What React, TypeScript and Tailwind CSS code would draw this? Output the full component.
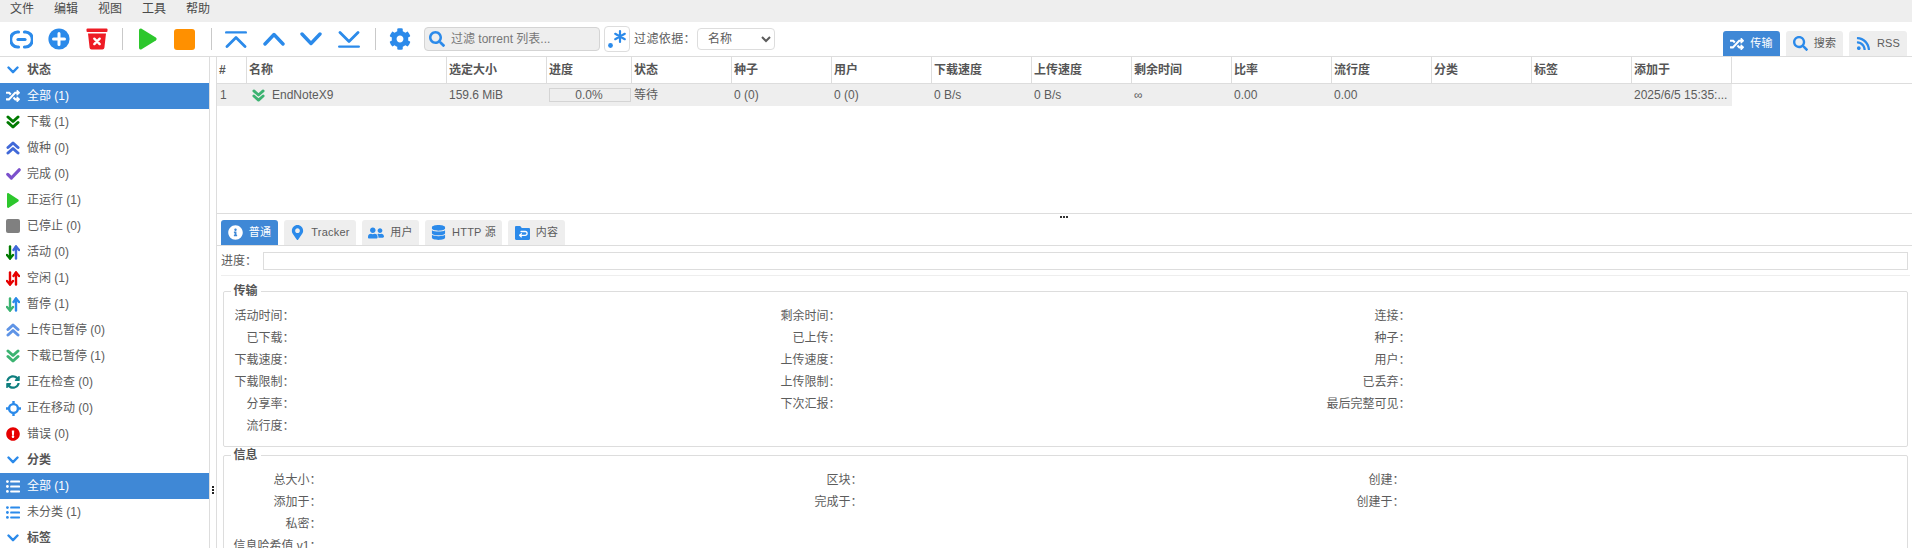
import React from "react";
import {
  FaCog,
  FaRandom,
  FaSearch,
  FaRss,
  FaInfoCircle,
  FaMapMarkerAlt,
  FaUserFriends,
  FaDatabase,
  FaSyncAlt,
  FaExclamationCircle,
} from "react-icons/fa";

const BLUE = "#2b8aea";

function Sep({ className }: { className: string }) {
  return <div className={`w-px h-[22px] bg-[#c9c9c9] ${className}`} />;
}

function ToolBtn({ children }: { children: React.ReactNode }) {
  return <div className="w-[37.5px] h-[24px] flex items-center justify-center shrink-0">{children}</div>;
}

function Chevrons({ color, up, size = 14 }: { color: string; up?: boolean; size?: number }) {
  return (
    <svg width={size} height={size} viewBox="0 0 14 14" fill="none" stroke={color} strokeWidth="3" strokeLinecap="round" strokeLinejoin="round">
      {up ? (
        <>
          <path d="M2 6.5 7 2l5 4.5" />
          <path d="M2 12 7 7.5l5 4.5" />
        </>
      ) : (
        <>
          <path d="M2 2l5 4.5L12 2" />
          <path d="M2 7.5 7 12l5-4.5" />
        </>
      )}
    </svg>
  );
}

function Arrows({ down, up }: { down: string; up: string }) {
  return (
    <svg width="14" height="15" viewBox="0 0 14 15" fill="none" strokeWidth="2.4" strokeLinecap="round" strokeLinejoin="round">
      <g stroke={down}>
        <path d="M4 1.5v12" />
        <path d="M1 10l3 3.5L7 10" />
      </g>
      <g stroke={up}>
        <path d="M10 13.5v-12" />
        <path d="M7.5 5 10 1.5 13 5" />
      </g>
    </svg>
  );
}

function ListIcon({ color }: { color: string }) {
  return (
    <svg width="14" height="13" viewBox="0 0 14 13" fill={color}>
      <circle cx="1.4" cy="1.6" r="1.4" />
      <circle cx="1.4" cy="6.5" r="1.4" />
      <circle cx="1.4" cy="11.4" r="1.4" />
      <rect x="4.2" y="0.6" width="9.8" height="2" rx="0.6" />
      <rect x="4.2" y="5.5" width="9.8" height="2" rx="0.6" />
      <rect x="4.2" y="10.4" width="9.8" height="2" rx="0.6" />
    </svg>
  );
}

function HeaderChevron() {
  return (
    <svg width="12" height="8" viewBox="0 0 12 8" fill="none" stroke={BLUE} strokeWidth="2.4" strokeLinecap="round" strokeLinejoin="round">
      <path d="M1.5 1.5 6 6.2l4.5-4.7" />
    </svg>
  );
}

function SideHeader({ label }: { label: string }) {
  return (
    <div className="h-[26px] flex items-center font-bold text-[#555]">
      <div className="w-[27px] flex justify-center pr-[1px]">
        <HeaderChevron />
      </div>
      <span>{label}</span>
    </div>
  );
}

function SideRow({ icon, label, active }: { icon: React.ReactNode; label: string; active?: boolean }) {
  return (
    <div className={`h-[26px] flex items-center ${active ? "bg-[#3f88d6] text-white" : "text-[#5c5c5c]"}`}>
      <div className="w-[27px] flex justify-center pr-[1px]">{icon}</div>
      <span>{label}</span>
    </div>
  );
}

function Cell({ w, children, bold }: { w: string; children?: React.ReactNode; bold?: boolean }) {
  return (
    <div className={`${w} shrink-0 h-full flex items-center pl-[2px] overflow-hidden whitespace-nowrap ${bold ? "font-bold border-r border-[#ddd]" : ""}`}>
      {children}
    </div>
  );
}

const colWidths = [
  "w-[30px]",
  "w-[200px]",
  "w-[100px]",
  "w-[85px]",
  "w-[100px]",
  "w-[100px]",
  "w-[100px]",
  "w-[100px]",
  "w-[100px]",
  "w-[100px]",
  "w-[100px]",
  "w-[100px]",
  "w-[100px]",
  "w-[100px]",
  "w-[100px]",
];

const headers = ["#", "名称", "选定大小", "进度", "状态", "种子", "用户", "下载速度", "上传速度", "剩余时间", "比率", "流行度", "分类", "标签", "添加于"];

function Tab({ icon, label, active, extra }: { icon: React.ReactNode; label: string; active?: boolean; extra: string }) {
  return (
    <div className={`h-[25px] flex items-center rounded-t-[3px] justify-center gap-[6px] text-[11px] tracking-[0.2px] ${extra} ${active ? "bg-[#3f88d6] text-white" : "bg-[#eee] text-[#5c5c5c]"}`}>
      {icon}
      <span>{label}</span>
    </div>
  );
}

function Label({ children }: { children?: React.ReactNode }) {
  return <div className="h-[22px] leading-[22px] text-right text-[#5c5c5c] whitespace-nowrap">{children}</div>;
}

export default function App() {
  return (
    <div className="w-[1912px] h-[548px] overflow-hidden bg-white flex flex-col text-[12px] text-[#5c5c5c] font-['Liberation_Sans','Noto_Sans_CJK_SC',sans-serif]">
      {/* menu */}
      <div className="h-[22px] bg-[#eee] flex items-center pl-[10px] gap-[20px] text-[#4a4a4a] shrink-0 pb-[4px]">
        <span>文件</span>
        <span>编辑</span>
        <span>视图</span>
        <span>工具</span>
        <span>帮助</span>
      </div>

      {/* toolbar */}
      <div className="h-[35px] border-b border-[#ddd] flex items-center shrink-0 pl-[3px]">
        <ToolBtn>
          <svg width="23" height="19" viewBox="0 0 23 19" fill="none" stroke={BLUE} strokeWidth="3.2" strokeLinecap="round">
            <path d="M8.5 2H7.5a6.9 7.5 0 0 0 0 15h1" />
            <path d="M14.5 2h1a6.9 7.5 0 0 1 0 15h-1" />
            <path d="M8 9.5h7" />
          </svg>
        </ToolBtn>
        <ToolBtn>
          <svg width="22" height="22" viewBox="0 0 22 22">
            <circle cx="11" cy="11" r="10.6" fill={BLUE} />
            <path d="M11 5.5v11M5.5 11h11" stroke="#fff" strokeWidth="3" strokeLinecap="round" />
          </svg>
        </ToolBtn>
        <ToolBtn>
          <svg width="22" height="22" viewBox="0 0 22 22">
            <rect x="0.5" y="0.5" width="21" height="3.6" rx="1" fill="#ee1c25" />
            <path d="M2 5.5h18l-1.6 14.2a2 2 0 0 1-2 1.8H5.6a2 2 0 0 1-2-1.8z" fill="#ee1c25" />
            <path d="M8.3 10.7l5.4 5.4M13.7 10.7l-5.4 5.4" stroke="#fff" strokeWidth="2.4" strokeLinecap="round" />
          </svg>
        </ToolBtn>
        <Sep className="ml-[6px] mr-[6px]" />
        <ToolBtn>
          <svg width="19" height="22" viewBox="0 0 19 22" fill="#2dc72d">
            <path d="M1 2.2C1 .8 2.4 0 3.6.7l14.2 8.8c1.1.7 1.1 2.3 0 3L3.6 21.3C2.4 22 1 21.2 1 19.8z" />
          </svg>
        </ToolBtn>
        <ToolBtn>
          <div className="w-[21px] h-[21px] rounded-[3px] bg-[#ff9000]" />
        </ToolBtn>
        <Sep className="ml-[7px] mr-[6px]" />
        <ToolBtn>
          <svg width="22" height="17" viewBox="0 0 22 17" fill="none" stroke={BLUE} strokeWidth="2.4" strokeLinecap="round" strokeLinejoin="round">
            <path d="M1.2 1.4h19.6" />
            <path d="M2 15.5 11 6.6l9 8.9" strokeWidth="2.8" />
          </svg>
        </ToolBtn>
        <ToolBtn>
          <svg width="22" height="14" viewBox="0 0 22 14" fill="none" stroke={BLUE} strokeWidth="3.4" strokeLinecap="round" strokeLinejoin="round">
            <path d="M2 12 11 2.5l9 9.5" />
          </svg>
        </ToolBtn>
        <ToolBtn>
          <svg width="22" height="14" viewBox="0 0 22 14" fill="none" stroke={BLUE} strokeWidth="3.4" strokeLinecap="round" strokeLinejoin="round">
            <path d="M2 2l9 9.5L20 2" />
          </svg>
        </ToolBtn>
        <ToolBtn>
          <svg width="22" height="17" viewBox="0 0 22 17" fill="none" stroke={BLUE} strokeWidth="2.4" strokeLinecap="round" strokeLinejoin="round">
            <path d="M2 1.5 11 10.4l9-8.9" strokeWidth="2.8" />
            <path d="M1.2 15.6h19.6" />
          </svg>
        </ToolBtn>
        <Sep className="ml-[7px] mr-[6px]" />
        <ToolBtn>
          <FaCog size={22} color={BLUE} />
        </ToolBtn>
        <div className="ml-[5px] w-[176px] h-[24px] bg-[#eee] border border-[#d4d4d4] rounded-[4px] flex items-center pl-[4px] gap-[6px] text-[#777]">
          <FaSearch size={16} color={BLUE} />
          <span>过滤 torrent 列表...</span>
        </div>
        <div className="ml-[4px] w-[26px] h-[26px] border border-[#ddd] rounded-[4px] flex items-center justify-center">
          <svg width="20" height="20" viewBox="0 0 20 20" fill="none" stroke={BLUE} strokeWidth="2.2" strokeLinecap="round">
            <circle cx="3.5" cy="16.5" r="2.4" fill={BLUE} stroke="none" />
            <path d="M13 2v11M8.2 4.8l9.6 5.4M17.8 4.8l-9.6 5.4" />
          </svg>
        </div>
        <span className="ml-[4px] text-[#5c5c5c] tracking-[0.4px]">过滤依据：</span>
        <select className="ml-[1px] w-[78px] h-[22px] border border-[#ddd] rounded-[4px] bg-white pl-[6px] text-[12px] text-[#5c5c5c]" defaultValue="name">
          <option value="name">名称</option>
        </select>
        <div className="ml-auto mr-[5px] self-end flex gap-[6px]">
          <Tab extra="w-[57px]" active icon={<FaRandom size={14} />} label="传输" />
          <Tab extra="w-[57px]" icon={<FaSearch size={15} color={BLUE} />} label="搜索" />
          <Tab extra="w-[58px]" icon={<FaRss size={15} color={BLUE} />} label="RSS" />
        </div>
      </div>

      {/* body */}
      <div className="flex-1 flex min-h-0">
        {/* sidebar */}
        <div className="w-[210px] shrink-0 border-r border-[#ddd] overflow-hidden">
          <SideHeader label="状态" />
          <SideRow active icon={<FaRandom size={14} />} label="全部 (1)" />
          <SideRow icon={<Chevrons color="#007a00" />} label="下载 (1)" />
          <SideRow icon={<Chevrons color="#4169d8" up />} label="做种 (0)" />
          <SideRow
            icon={
              <svg width="15" height="12" viewBox="0 0 15 12" fill="none" stroke="#7b50cc" strokeWidth="3.2" strokeLinecap="round" strokeLinejoin="round">
                <path d="M1.8 6.4 5.4 10 13.2 1.8" />
              </svg>
            }
            label="完成 (0)"
          />
          <SideRow
            icon={
              <svg width="12" height="15" viewBox="0 0 12 15" fill="#2dc72d">
                <path d="M0 1.2C0 .3 1 -.2 1.7.3l9.6 6.2c.6.4.6 1.4 0 1.9L1.7 14.7c-.7.5-1.7 0-1.7-.9z" />
              </svg>
            }
            label="正运行 (1)"
          />
          <SideRow icon={<div className="w-[14px] h-[14px] rounded-[2px] bg-[#808080]" />} label="已停止 (0)" />
          <SideRow icon={<Arrows down="#007a00" up="#4169d8" />} label="活动 (0)" />
          <SideRow icon={<Arrows down="#e60000" up="#e60000" />} label="空闲 (1)" />
          <SideRow icon={<Arrows down="#3cb371" up={BLUE} />} label="暂停 (1)" />
          <SideRow icon={<Chevrons color="#5f94e6" up />} label="上传已暂停 (0)" />
          <SideRow icon={<Chevrons color="#3cb371" />} label="下载已暂停 (1)" />
          <SideRow icon={<FaSyncAlt size={14} color="#0f7f7f" />} label="正在检查 (0)" />
          <SideRow
            icon={
              <svg width="15" height="15" viewBox="0 0 15 15" fill="none" stroke={BLUE} strokeWidth="2.4">
                <circle cx="7.5" cy="7.5" r="4.4" />
                <path d="M7.5 0v3M7.5 12v3M0 7.5h3M12 7.5h3" />
              </svg>
            }
            label="正在移动 (0)"
          />
          <SideRow icon={<FaExclamationCircle size={14} color="#e60000" />} label="错误 (0)" />
          <SideHeader label="分类" />
          <SideRow active icon={<ListIcon color="#fff" />} label="全部 (1)" />
          <SideRow icon={<ListIcon color={BLUE} />} label="未分类 (1)" />
          <SideHeader label="标签" />
        </div>

        {/* splitter */}
        <div className="w-[6px] shrink-0 flex flex-col items-center">
          <div className="mt-[429px] flex flex-col gap-[1px]">
            <div className="w-[2px] h-[2px] bg-[#222]" />
            <div className="w-[2px] h-[2px] bg-[#222]" />
            <div className="w-[2px] h-[2px] bg-[#222]" />
          </div>
        </div>

        {/* main */}
        <div className="flex-1 min-w-0 flex flex-col border-l border-[#ddd]">
          <div className="h-[157px] shrink-0 border-b border-[#ddd]">
            <div className="h-[27px] border-b border-[#ddd] flex font-bold text-[#555]">
              {headers.map((h, i) => (
                <Cell key={h} w={colWidths[i]} bold>
                  {h}
                </Cell>
              ))}
            </div>
            <div className="h-[22px] w-[1515px] bg-[#eee] flex text-[#5c5c5c]">
              <Cell w={colWidths[0]}>
                <span className="pl-[1px]">1</span>
              </Cell>
              <Cell w={colWidths[1]}>
                <span className="pl-[3px] pr-[7px]">
                  <Chevrons color="#3cb371" size={13} />
                </span>
                EndNoteX9
              </Cell>
              <Cell w={colWidths[2]}>159.6 MiB</Cell>
              <Cell w={colWidths[3]}>
                <div className="w-[82px] h-[14px] border border-[#d4d4d4] bg-[#eee] flex items-center justify-center pr-[2px]">0.0%</div>
              </Cell>
              <Cell w={colWidths[4]}>等待</Cell>
              <Cell w={colWidths[5]}>0 (0)</Cell>
              <Cell w={colWidths[6]}>0 (0)</Cell>
              <Cell w={colWidths[7]}>0 B/s</Cell>
              <Cell w={colWidths[8]}>0 B/s</Cell>
              <Cell w={colWidths[9]}>∞</Cell>
              <Cell w={colWidths[10]}>0.00</Cell>
              <Cell w={colWidths[11]}>0.00</Cell>
              <Cell w={colWidths[12]} />
              <Cell w={colWidths[13]} />
              <Cell w={colWidths[14]}>2025/6/5 15:35:...</Cell>
            </div>
          </div>

          {/* horizontal splitter */}
          <div className="h-[6px] shrink-0 flex justify-center items-center gap-[1px] pr-[2px]">
            <div className="w-[2px] h-[2px] bg-[#333]" />
            <div className="w-[2px] h-[2px] bg-[#333]" />
            <div className="w-[2px] h-[2px] bg-[#333]" />
          </div>

          {/* tabs */}
          <div className="h-[26px] shrink-0 border-b border-[#ddd] flex gap-[6px] pl-[4px]">
            <Tab extra="w-[57px]" active icon={<FaInfoCircle size={15} />} label="普通" />
            <Tab extra="w-[72px]" icon={<FaMapMarkerAlt size={15} color={BLUE} />} label="Tracker" />
            <Tab extra="w-[57px]" icon={<FaUserFriends size={16} color={BLUE} />} label="用户" />
            <Tab extra="w-[77px]" icon={<FaDatabase size={15} color={BLUE} />} label="HTTP 源" />
            <Tab
              extra="w-[57px]"
              icon={
                <svg width="15" height="14" viewBox="0 0 15 14">
                  <path d="M0 1.2C0 .5.5 0 1.2 0h4l1.6 2h7c.7 0 1.2.5 1.2 1.2v9.6c0 .7-.5 1.2-1.2 1.2H1.2C.5 14 0 13.5 0 12.8z" fill={BLUE} />
                  <path d="M6 5.5h4.2a1.8 1.8 0 0 1 0 3.8H4.8M6.4 7.7 4.6 9.3l1.8 1.6" fill="none" stroke="#fff" strokeWidth="1.3" strokeLinecap="round" strokeLinejoin="round" />
                </svg>
              }
              label="内容"
            />
          </div>

          {/* details */}
          <div className="flex-1 min-h-0 overflow-hidden pl-[4px] pr-[2px]">
            <div className="h-[30px] flex items-center border-b border-[#eee] text-[#5c5c5c] pt-[1px]">
              <span className="w-[42px]">进度：</span>
              <div className="w-[1645px] h-[18px] border border-[#ddd]" />
            </div>
            <fieldset className="mt-[7px] ml-[1.5px] mr-[2px] border border-[#ddd] rounded-[2px] pt-[6px] pb-[9px]">
              <legend className="ml-[7px] px-[3px] h-[16px] leading-[17px] font-bold text-[#555]">传输</legend>
              <div className="grid grid-cols-[71px_546px_570px]">
                {["活动时间：", "剩余时间：", "连接：", "已下载：", "已上传：", "种子：", "下载速度：", "上传速度：", "用户：", "下载限制：", "上传限制：", "已丢弃：", "分享率：", "下次汇报：", "最后完整可见：", "流行度："].map((t) => (
                  <Label key={t}>{t}</Label>
                ))}
              </div>
            </fieldset>
            <fieldset className="ml-[1.5px] mr-[2px] border border-[#ddd] rounded-[2px] pt-[6px] pb-[9px]">
              <legend className="ml-[7px] px-[3px] h-[16px] leading-[17px] font-bold text-[#555]">信息</legend>
              <div className="grid grid-cols-[98px_541px_542px]">
                {["总大小：", "区块：", "创建：", "添加于：", "完成于：", "创建于：", "私密："].map((t) => (
                  <Label key={t}>{t}</Label>
                ))}
                <div className="col-start-1 h-[22px] leading-[22px] text-right text-[#5c5c5c] whitespace-nowrap">信息哈希值 v1：</div>
              </div>
            </fieldset>
          </div>
        </div>
      </div>
    </div>
  );
}
